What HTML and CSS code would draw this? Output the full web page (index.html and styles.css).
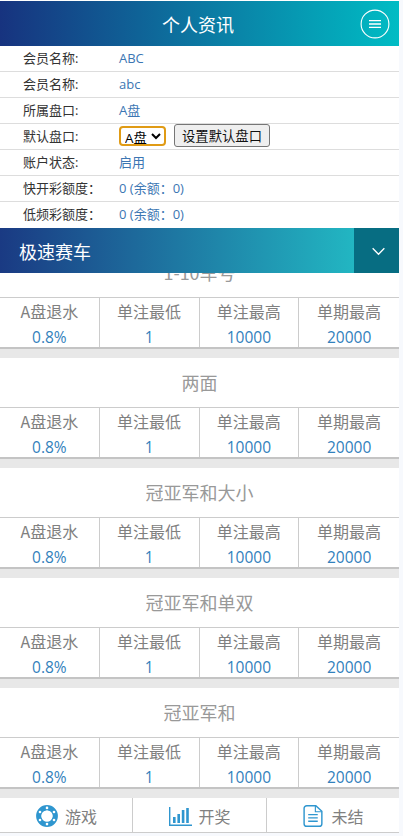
FILE: index.html
```html
<!DOCTYPE html>
<html lang="zh">
<head>
<meta charset="utf-8">
<title>个人资讯</title>
<link rel="stylesheet" href="styles.css">
</head>
<body>
<div class="app">
  <header class="topbar">
    <h1>个人资讯</h1>
    <button class="menu" aria-label="菜单">
      <svg viewBox="0 0 30 30" width="30" height="30"><circle cx="15" cy="15" r="13.9" fill="none" stroke="#fff" stroke-width="1.1"/><path d="M9 11.6h12M9 15h12M9 18.4h12" stroke="#fff" stroke-width="1.4"/></svg>
    </button>
  </header>
  <section class="info">
    <div class="row"><span class="label">会员名称:</span><span class="value">ABC</span></div>
    <div class="row"><span class="label">会员名称:</span><span class="value">abc</span></div>
    <div class="row"><span class="label">所属盘口:</span><span class="value">A盘</span></div>
    <div class="row"><span class="label">默认盘口:</span><span class="value controls"><select class="pick"><option>A盘</option></select><button class="set">设置默认盘口</button></span></div>
    <div class="row"><span class="label">账户状态:</span><span class="value">启用</span></div>
    <div class="row"><span class="label">快开彩额度：</span><span class="value">0 (余额：0)</span></div>
    <div class="row last"><span class="label">低频彩额度：</span><span class="value">0 (余额：0)</span></div>
  </section>
  <div class="gamebar">
    <span class="gamename">极速赛车</span>
    <span class="toggle"><svg viewBox="0 0 16 10" width="15" height="9"><path d="M1.5 1.5 8 8l6.5-6.5" fill="none" stroke="#fff" stroke-width="1.5"/></svg></span>
  </div>
  <main class="scroll">
    <div class="list">
      <section class="block">
        <h2>1-10车号</h2>
        <div class="limits">
          <div class="cell"><b>A盘退水</b><i>0.8%</i></div><div class="cell"><b>单注最低</b><i>1</i></div><div class="cell"><b>单注最高</b><i>10000</i></div><div class="cell"><b>单期最高</b><i>20000</i></div>
        </div>
      </section>
      <section class="block">
        <h2>两面</h2>
        <div class="limits">
          <div class="cell"><b>A盘退水</b><i>0.8%</i></div><div class="cell"><b>单注最低</b><i>1</i></div><div class="cell"><b>单注最高</b><i>10000</i></div><div class="cell"><b>单期最高</b><i>20000</i></div>
        </div>
      </section>
      <section class="block">
        <h2>冠亚军和大小</h2>
        <div class="limits">
          <div class="cell"><b>A盘退水</b><i>0.8%</i></div><div class="cell"><b>单注最低</b><i>1</i></div><div class="cell"><b>单注最高</b><i>10000</i></div><div class="cell"><b>单期最高</b><i>20000</i></div>
        </div>
      </section>
      <section class="block">
        <h2>冠亚军和单双</h2>
        <div class="limits">
          <div class="cell"><b>A盘退水</b><i>0.8%</i></div><div class="cell"><b>单注最低</b><i>1</i></div><div class="cell"><b>单注最高</b><i>10000</i></div><div class="cell"><b>单期最高</b><i>20000</i></div>
        </div>
      </section>
      <section class="block">
        <h2>冠亚军和</h2>
        <div class="limits">
          <div class="cell"><b>A盘退水</b><i>0.8%</i></div><div class="cell"><b>单注最低</b><i>1</i></div><div class="cell"><b>单注最高</b><i>10000</i></div><div class="cell"><b>单期最高</b><i>20000</i></div>
        </div>
      </section>
    </div>
  </main>
  <nav class="tabs">
    <a class="tab">
      <svg viewBox="0 0 24 24" width="24" height="24"><circle cx="12" cy="12" r="8.2" fill="none" stroke="#2f96cf" stroke-width="5.4"/><circle cx="12" cy="12" r="5.6" fill="#fff"/><g fill="#fff"><circle cx="12" cy="3.9" r="1.3"/><circle cx="12" cy="20.1" r="1.3"/><circle cx="5" cy="8" r="1.3"/><circle cx="19" cy="8" r="1.3"/><circle cx="5" cy="16" r="1.3"/><circle cx="19" cy="16" r="1.3"/></g></svg>
      <span>游戏</span>
    </a>
    <a class="tab">
      <svg viewBox="0 0 24 24" width="24" height="24" fill="#2f96cf"><path d="M1 3h1.4v17.6H24V22H1z"/><rect x="5" y="13" width="2.6" height="6"/><rect x="9.4" y="10" width="2.6" height="9"/><rect x="13.8" y="6" width="2.6" height="13"/><rect x="18.2" y="4" width="2.6" height="15"/></svg>
      <span>开奖</span>
    </a>
    <a class="tab wide">
      <svg viewBox="0 0 22 24" width="21" height="24"><path d="M5 1.2h9.5L20.8 7v13a2.8 2.8 0 0 1-2.8 2.8H5A2.8 2.8 0 0 1 2.2 20V4A2.8 2.8 0 0 1 5 1.2z" fill="none" stroke="#2f96cf" stroke-width="1.5"/><path d="M14 1.5V7.5h6.5" fill="none" stroke="#2f96cf" stroke-width="1.2"/><path d="M6.5 10.5h10M6.5 14h10M6.5 17.5h10" stroke="#2f96cf" stroke-width="1.4"/></svg>
      <span>未结</span>
    </a>
  </nav>
</div>
</body>
</html>
```
FILE: styles.css
```css
* { box-sizing: border-box; }
html, body { margin: 0; height: 100%; }
body {
  background: #f7f9fd;
  font-family: "Open Sans", "Noto Sans CJK SC", sans-serif;
  overflow: hidden;
}
.app {
  width: 399px;
  height: 833px;
  display: flex;
  flex-direction: column;
  background: #fff;
  padding-top: 1px;
}
.topbar {
  height: 45px;
  flex: none;
  display: flex;
  align-items: center;
  justify-content: center;
  position: relative;
  background: linear-gradient(90deg, #17337f 0%, #00bcc4 100%);
}
.topbar h1 {
  margin: 0;
  font: 400 18px/1 "Noto Sans CJK SC", sans-serif;
  color: #fff;
  padding-right: 3px;
}
.menu {
  position: absolute;
  right: 9px;
  top: 8px;
  width: 30px;
  height: 30px;
  padding: 0;
  border: 0;
  background: none;
  display: block;
}
.menu svg { display: block; }
.info { flex: none; }
.row {
  height: 26px;
  display: flex;
  align-items: center;
  padding-bottom: 2px;
  border-bottom: 1px solid #ddd;
  font-size: 13px;
  line-height: 22px;
}
.row.last { border-bottom: 0; }
.label { width: 119px; padding-left: 23px; color: #333; flex: none; }
.value { color: #3c76b3; }
.controls { display: flex; align-items: center; gap: 8px; }
.pick {
  width: 47px;
  height: 20px;
  padding: 0;
  font: 13.33px "Open Sans", "Noto Sans CJK SC", sans-serif;
  color: #000;
  background: #fff;
  border: 2px solid #e09b15;
  border-radius: 4px;
}
.set {
  width: 96px;
  height: 23px;
  padding: 0;
  font: 13.33px "Noto Sans CJK SC", sans-serif;
  color: #111;
  background: #efefef;
  border: 1px solid #767676;
  border-radius: 3px;
}
.gamebar {
  height: 45px;
  flex: none;
  display: flex;
  position: relative;
  z-index: 1;
}
.gamename {
  flex: 1;
  display: flex;
  align-items: center;
  padding-left: 19px;
  font: 400 18px/1 "Noto Sans CJK SC", sans-serif;
  color: #fff;
  background: linear-gradient(90deg, #1a3a83 0%, #22b6c2 100%);
}
.toggle {
  width: 45px;
  height: 45px;
  flex: none;
  display: flex;
  align-items: center;
  justify-content: center;
  padding: 2px 0 0 4px;
  background: #076d82;
}
.scroll { flex: 1; min-height: 0; overflow: hidden; }
.list { margin-top: -25px; }
.block { background: #fff; }
.block h2 {
  margin: 0;
  height: 49px;
  padding-bottom: 2px;
  display: flex;
  align-items: center;
  justify-content: center;
  font: 400 18px/1 "Noto Sans CJK SC", sans-serif;
  color: #999;
}
.limits {
  display: grid;
  grid-template-columns: repeat(4, 1fr);
  height: 61px;
  border-top: 1px solid #ccc;
  border-bottom: 10px solid #e8e8e8;
  position: relative;
}
.limits::after {
  content: "";
  position: absolute;
  left: 0;
  right: 0;
  bottom: -1px;
  height: 2px;
  background: #c4c4c4;
}
.cell {
  display: flex;
  flex-direction: column;
  align-items: center;
  border-right: 1px solid #ccc;
}
.cell:last-child { border-right: 0; }
.cell b {
  font: 400 16px/26px "Noto Sans CJK SC", sans-serif;
  color: #808080;
}
.cell i {
  font: 400 15.5px/24px "Open Sans", sans-serif;
  font-style: normal;
  color: #3281bc;
  padding-top: 1px;
}
.tabs {
  height: 35px;
  flex: none;
  display: grid;
  grid-template-columns: 133px 134px 132px;
  margin-top: auto;
  background: #fff;
  border-bottom: 1px solid #ccc;
}
.tab {
  display: flex;
  align-items: center;
  justify-content: center;
  gap: 6px;
  padding-top: 1px;
  border-right: 1px solid #ccc;
  font: 400 16px/1 "Noto Sans CJK SC", sans-serif;
  color: #808080;
}
.tab:last-child { border-right: 0; }
.tab.wide { gap: 8px; }
.tab svg { flex: none; }
```
